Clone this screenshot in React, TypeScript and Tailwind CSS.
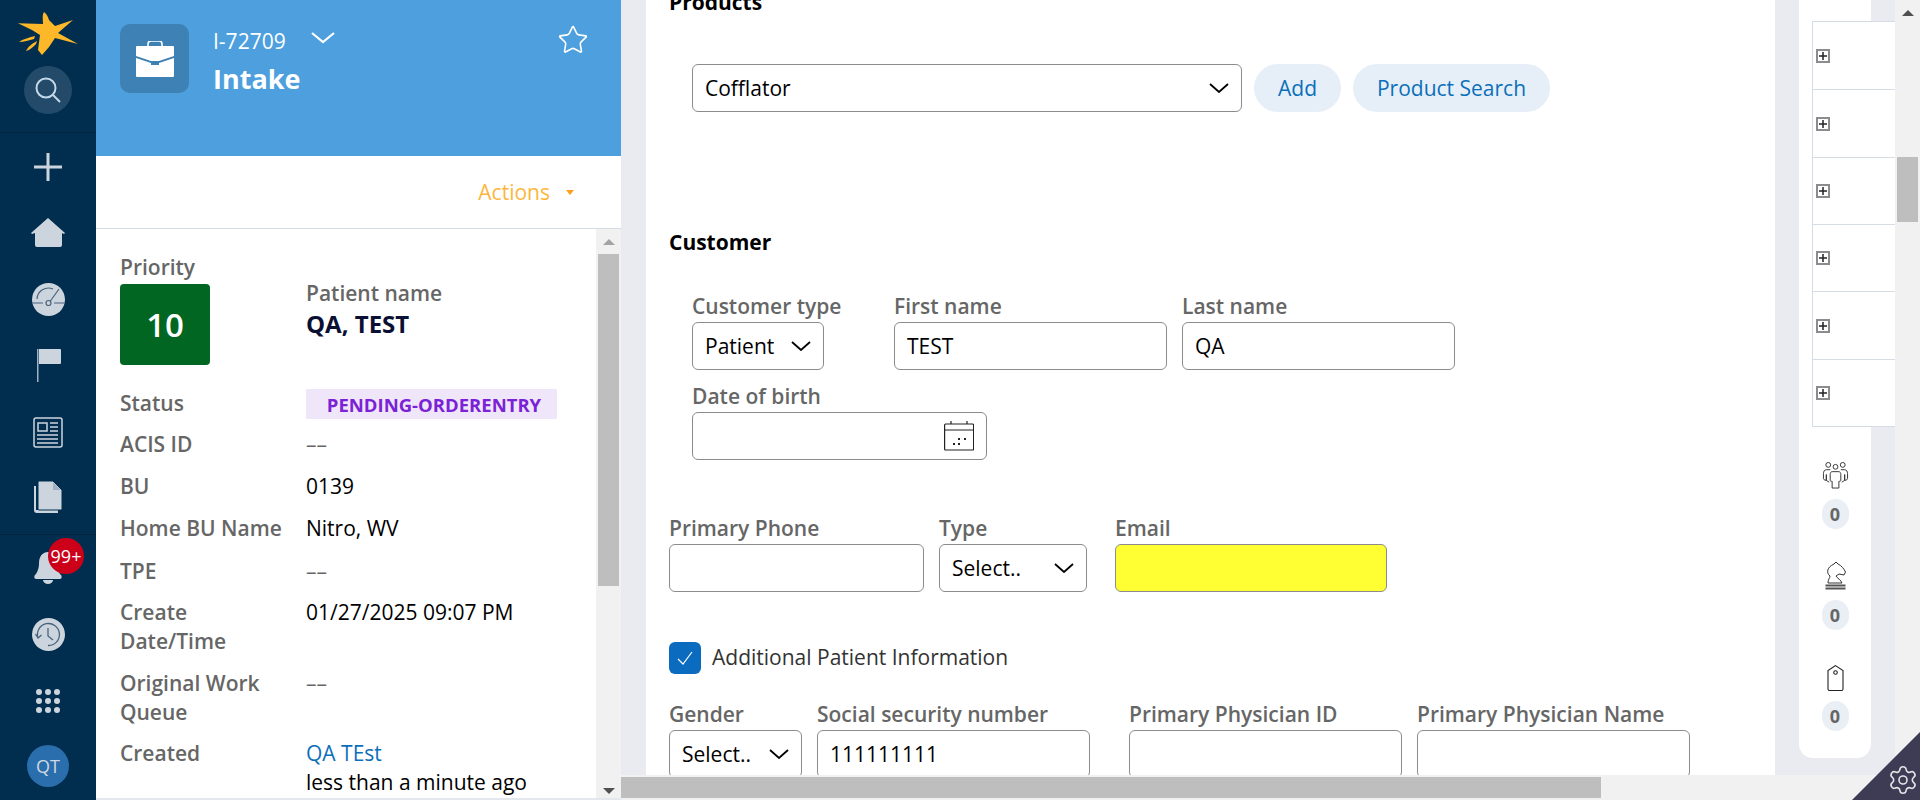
import React from "react";
import { Settings, Star } from "lucide-react";

const Chevron = ({ className = "" }: { className?: string }) => (
	<svg viewBox="0 0 20 10" fill="none" className={`h-[10px] w-[20px] ${className}`}>
		<path d="M1 1l9 8 9-8" stroke="currentColor" strokeWidth="1.8" />
	</svg>
);

const SelectBox = ({ text, width }: { text: string; width: string }) => (
	<div className={`flex h-[48px] items-center justify-between rounded-[6px] border border-[#8c8c8c] bg-white pl-[12px] pr-[12px] text-black ${width}`}>
		<span className="pt-[2px]">{text}</span>
		<Chevron />
	</div>
);

const Field = ({ label, children }: { label: string; children: React.ReactNode }) => (
	<div className="flex flex-col">
		<div className="mb-[4px] h-[24px] whitespace-nowrap font-semibold leading-[24px] text-[#666]">{label}</div>
		{children}
	</div>
);

const Input = ({ value, width, className = "bg-white" }: { value?: string; width: string; className?: string }) => (
	<div className={`flex h-[48px] items-center rounded-[6px] border border-[#8c8c8c] pl-[12px] pt-[2px] text-black ${width} ${className}`}>{value}</div>
);

const InfoRow = ({ label, value, mt }: { label: React.ReactNode; value: React.ReactNode; mt: string }) => (
	<div className={`flex leading-[29px] ${mt}`}>
		<div className="w-[186px] shrink-0 pr-[20px] font-semibold text-[#666]">{label}</div>
		<div className="text-black">{value}</div>
	</div>
);

const Dashes = () => <span className="text-[#666]">––</span>;

const Sidebar = () => (
	<aside className="flex h-[800px] w-[96px] shrink-0 flex-col items-center bg-[#012e4e]">
		<svg viewBox="0 0 60 45" className="mt-[11px] h-[45px] w-[60px] shrink-0" fill="#fdb82a">
			<path d="M0 12.300L25 13C25 8 24 4 26 1C29 3 30 6 31 9L37 15L55 9L40 22L60 33L37 27L31 36L24 44L20 39L22 24L14 19Z" />
			<path d="M1 31C5 28 10 27 17 25L16 28C11 29 6 31 1 31Z" />
			<path d="M8 40C10 36 13 33 19 30L18 33C15 36 12 39 8 40Z" />
		</svg>
		<div className="mt-[10px] flex h-[48px] w-[48px] shrink-0 items-center justify-center rounded-full bg-[#234a69]">
			<svg viewBox="0 0 26 26" fill="none" className="h-[26px] w-[26px]" stroke="#c3d9ea" strokeWidth="2">
				<circle cx="11" cy="11" r="9.500" />
				<path d="M18 18l7 7" />
			</svg>
		</div>
		<div className="mt-[18px] h-px w-full shrink-0 bg-[#012340]" />
		<svg viewBox="0 0 28 28" className="mt-[20px] h-[28px] w-[28px] shrink-0" stroke="#ccd5de" strokeWidth="3">
			<path d="M14 0v28M0 14h28" />
		</svg>
		<svg viewBox="0 0 34 29" className="mt-[37px] h-[29px] w-[34px] shrink-0" fill="#ccd5de">
			<path d="M17 0L34 15l-1 1-2-1v12a2 2 0 0 1-2 2H6a2 2 0 0 1-2-2V15l-3 1-1-1Z" />
		</svg>
		<svg viewBox="0 0 33 33" fill="none" className="mt-[36px] h-[33px] w-[33px] shrink-0">
			<circle cx="16.500" cy="16.500" r="16.500" fill="#ccd5de" />
			<path d="M5 16a11.500 11.500 0 0 1 16-10M0 20h11M22 20h11M18 18.500L27 6" stroke="#47637c" strokeWidth="1.200" />
			<circle cx="16.500" cy="20" r="2.500" stroke="#47637c" strokeWidth="1.200" />
		</svg>
		<svg viewBox="0 0 25 33" className="mt-[33px] h-[33px] w-[25px] shrink-0">
			<path d="M1 0h1.500v33H1z" fill="#9fb1c2" />
			<path d="M3 0h21a1 1 0 0 1 1 1v13a1 1 0 0 1-1 1H3Z" fill="#ccd5de" />
		</svg>
		<svg viewBox="0 0 30 31" fill="none" className="mt-[35px] h-[31px] w-[30px] shrink-0" stroke="#ccd5de" strokeWidth="1.500">
			<rect x="1" y="1" width="28" height="29" rx="2" />
			<rect x="5" y="6" width="9" height="8" />
			<path d="M17 6h8M17 10h8M17 14h8M4 18h21M4 22h21M4 26h21" />
		</svg>
		<svg viewBox="0 0 28 32" className="mt-[33px] h-[32px] w-[28px] shrink-0" fill="#ccd5de">
			<path d="M0 5h2v24h22v3H3a3 3 0 0 1-3-3Z" />
			<path d="M4 1a1 1 0 0 1 1-1h14l9 9v19a1 1 0 0 1-1 1H5a1 1 0 0 1-1-1Z" stroke="#012e4e" strokeWidth="1" />
			<path d="M19 1v8h8" fill="#9fb1c2" />
		</svg>
		<div className="mt-[21px] h-px w-full shrink-0 bg-[#012340]" />
		<div className="relative mt-[17px] h-[32px] w-[28px] shrink-0">
			<svg viewBox="0 0 28 32" className="h-[32px] w-[28px]" fill="#ccd5de">
				<path d="M14 0c6 0 9 5 9 11 0 6 2 10 4 12 1 1 1 4-1 4H2c-2 0-2-3-1-4 2-2 4-6 4-12 0-6 3-11 9-11Z" />
				<path d="M9 28h10a5 4 0 0 1-10 0Z" />
			</svg>
			<div className="absolute left-[14px] top-[-14px] flex h-[36px] w-[36px] items-center justify-center rounded-full bg-[#cc0019] text-[18px] text-white">99+</div>
		</div>
		<svg viewBox="0 0 33 33" fill="none" className="mt-[34px] h-[33px] w-[33px] shrink-0">
			<circle cx="16.500" cy="16.500" r="16.500" fill="#ccd5de" />
			<path d="M6 20A11 11 0 1 1 16 27.500M3.500 16l2.500 4 3.500-3M16 10v8l5 4" stroke="#47637c" strokeWidth="1.300" />
		</svg>
		<div className="mt-[38px] grid w-[24px] shrink-0 grid-cols-3 gap-[3px]">
			{Array.from({ length: 9 }).map((_, i) => (
				<div key={i} className="h-[6px] w-[6px] rounded-full bg-[#ccd5de]" />
			))}
		</div>
		<div className="mt-[32px] flex h-[42px] w-[42px] shrink-0 items-center justify-center rounded-full bg-[#2a6ead] text-[18px] text-[#cfd8e2]">QT</div>
	</aside>
);

const LeftPanel = () => (
	<section className="flex h-[800px] w-[525px] shrink-0 flex-col bg-white">
		<div className="flex h-[156px] shrink-0 items-start bg-[#4d9fdd] pl-[24px] pr-[32px] pt-[24px] text-white">
			<div className="flex h-[69px] w-[69px] items-center justify-center rounded-[10px] bg-[#3e81b4]">
				<svg viewBox="0 0 38 36" className="h-[36px] w-[38px]">
					<path d="M12 6V3a3 3 0 0 1 3-3h8a3 3 0 0 1 3 3v3" fill="none" stroke="#fff" strokeWidth="1.600" />
					<path d="M1 5h36a1 1 0 0 1 1 1v9l-15 5h-8L0 15V6a1 1 0 0 1 1-1Z" fill="#fff" />
					<path d="M0 17l15 5v2h8v-2l15-5v18a1 1 0 0 1-1 1H1a1 1 0 0 1-1-1Z" fill="#fff" />
				</svg>
			</div>
			<div className="ml-[24px] flex flex-col">
				<div className="flex h-[36px] items-center text-[21px]">
					I-72709
					<svg viewBox="0 0 24 12" fill="none" className="ml-[25px] mt-[-8px] h-[12px] w-[24px]">
						<path d="M1 1l11 9 11-9" stroke="#fff" strokeWidth="2.200" />
					</svg>
				</div>
				<div className="mt-[2px] text-[27px] font-bold leading-[34px]">Intake</div>
			</div>
			<Star className="ml-auto h-[32px] w-[32px]" strokeWidth={1.2} />
		</div>
		<div className="flex h-[73px] shrink-0 items-center justify-end border-b border-[#d5dce5] pr-[47px] text-[21px] text-[#fdb63c]">
			<span className="pt-[2px]">Actions</span>
			<div className="ml-[16px] h-0 w-0 border-x-[4.500px] border-t-[5px] border-x-transparent border-t-[#fd9f1c]" />
		</div>
		<div className="flex min-h-0 flex-1 border-b-2 border-[#e4e8ee]">
			<div className="min-w-0 flex-1 overflow-hidden pl-[24px] pt-[26px] text-[21px]">
				<div className="flex">
					<div className="w-[186px] shrink-0">
						<div className="font-semibold leading-[24px] text-[#666]">Priority</div>
						<div className="mt-[5px] flex h-[81px] w-[90px] items-center justify-center rounded-[4px] bg-[#006622] text-[33px] font-semibold text-white">10</div>
					</div>
					<div className="pt-[26px]">
						<div className="font-semibold leading-[24px] text-[#666]">Patient name</div>
						<div className="mt-[4px] text-[24px] font-bold leading-[30px] text-[#0a1033]">QA, TEST</div>
					</div>
				</div>
				<InfoRow
					mt="mt-[24px]"
					label={<span className="block leading-[28px]">Status</span>}
					value={
						<div className="flex h-[30px] w-[251px] items-center justify-center bg-[#f0e6fa] pl-[5px] text-[18.500px] font-bold text-[#7b22d6]">PENDING-ORDERENTRY</div>
					}
				/>
				<InfoRow mt="mt-[11px]" label="ACIS ID" value={<Dashes />} />
				<InfoRow mt="mt-[13px]" label="BU" value="0139" />
				<InfoRow mt="mt-[13px]" label="Home BU Name" value="Nitro, WV" />
				<InfoRow mt="mt-[14px]" label="TPE" value={<Dashes />} />
				<InfoRow mt="mt-[12px]" label="Create Date/Time" value="01/27/2025 09:07 PM" />
				<InfoRow mt="mt-[13px]" label="Original Work Queue" value={<Dashes />} />
				<InfoRow
					mt="mt-[12px]"
					label="Created"
					value={
						<>
							<div className="text-[#0b6fba]">QA TEst</div>
							<div>less than a minute ago</div>
						</>
					}
				/>
			</div>
			<div className="flex w-[25px] shrink-0 flex-col items-center bg-[#f1f1f1] pb-[4px] pt-[10px]">
				<div className="h-0 w-0 border-x-[6px] border-b-[6px] border-x-transparent border-b-[#a3a3a3]" />
				<div className="mt-[9px] h-[332px] w-[21px] bg-[#bebebe]" />
				<div className="mt-auto h-0 w-0 border-x-[6px] border-t-[6px] border-x-transparent border-t-[#505050]" />
			</div>
		</div>
	</section>
);

const MainForm = () => (
	<div className="w-[1129px] shrink-0 overflow-hidden bg-white pl-[23px] text-[21px]">
		<div className="mt-[-10px] font-bold leading-[24px] text-black">Products</div>
		<div className="ml-[23px] mt-[50px] flex">
			<SelectBox text="Cofflator" width="w-[550px]" />
			<div className="ml-[12px] flex h-[48px] w-[87px] items-center justify-center rounded-full bg-[#e6eff7] pt-[2px] text-[#0b6fba]">Add</div>
			<div className="ml-[12px] flex h-[48px] w-[197px] items-center justify-center rounded-full bg-[#e6eff7] pt-[2px] text-[#0b6fba]">Product Search</div>
		</div>
		<div className="mt-[118px] font-bold leading-[24px] text-black">Customer</div>
		<div className="ml-[23px] mt-[40px] flex">
			<div className="w-[132px]">
				<Field label="Customer type">
					<SelectBox text="Patient" width="w-[132px]" />
				</Field>
			</div>
			<div className="ml-[70px]">
				<Field label="First name">
					<Input value="TEST" width="w-[273px]" />
				</Field>
			</div>
			<div className="ml-[15px]">
				<Field label="Last name">
					<Input value="QA" width="w-[273px]" />
				</Field>
			</div>
		</div>
		<div className="ml-[23px] mt-[14px]">
			<Field label="Date of birth">
				<div className="flex h-[48px] w-[295px] items-center justify-end rounded-[6px] border border-[#8c8c8c] pr-[12px]">
					<svg viewBox="0 0 30 30" fill="none" className="h-[30px] w-[30px]" stroke="#222" strokeWidth="1.200">
						<rect x="0.600" y="3" width="29" height="26" rx="1" />
						<path d="M0.600 9h29M7 0v3M23 0v3" />
						<path d="M9 23h2M14 23h2M14 18h2M20 18h2" strokeWidth="2" />
					</svg>
				</div>
			</Field>
		</div>
		<div className="mt-[56px] flex">
			<Field label="Primary Phone">
				<Input width="w-[255px]" />
			</Field>
			<div className="ml-[15px]">
				<Field label="Type">
					<SelectBox text="Select.." width="w-[148px]" />
				</Field>
			</div>
			<div className="ml-[28px]">
				<Field label="Email">
					<Input width="w-[272px]" className="bg-[#ffff33]" />
				</Field>
			</div>
		</div>
		<div className="mt-[50px] flex items-center">
			<div className="flex h-[32px] w-[32px] items-center justify-center rounded-[6px] bg-[#0b6bbf]">
				<svg viewBox="0 0 16 14" fill="none" className="h-[14px] w-[16px]">
					<path d="M1 8l5 5L15 1" stroke="#fff" strokeWidth="1.200" />
				</svg>
			</div>
			<span className="ml-[11px] text-[#333]">Additional Patient Information</span>
		</div>
		<div className="mt-[28px] flex">
			<Field label="Gender">
				<SelectBox text="Select.." width="w-[133px]" />
			</Field>
			<div className="ml-[15px]">
				<Field label="Social security number">
					<Input value="111111111" width="w-[273px]" />
				</Field>
			</div>
			<div className="ml-[39px]">
				<Field label="Primary Physician ID">
					<Input width="w-[273px]" />
				</Field>
			</div>
			<div className="ml-[15px]">
				<Field label="Primary Physician Name">
					<Input width="w-[273px]" />
				</Field>
			</div>
		</div>
	</div>
);

const Counter = ({ children, mt }: { children: React.ReactNode; mt: string }) => (
	<div className={`flex flex-col items-center ${mt}`}>
		{children}
		<div className="mt-[10px] flex h-[30px] w-[27px] items-center justify-center rounded-full bg-[#e9eff4] text-[18px] font-bold text-[#666]">0</div>
	</div>
);

const SidePanel = () => (
	<div className="w-[72px] shrink-0 rounded-b-[14px] bg-white">
		<div className="ml-[13px] mt-[21px] w-[83px] border-y border-l border-[#d5dce5] bg-white">
			{Array.from({ length: 6 }).map((_, i) => (
				<div key={i} className="flex h-[67.350px] items-center border-t border-[#d5dce5] pl-[3px] first:border-t-0">
					<div className="flex h-[14px] w-[14px] items-center justify-center border-2 border-[#8c8c8c] bg-white text-black">
						<svg viewBox="0 0 8 8" className="h-[8px] w-[8px]" stroke="#222" strokeWidth="1.500">
							<path d="M4 0v8M0 4h8" />
						</svg>
					</div>
				</div>
			))}
		</div>
		<div className="flex flex-col items-center">
			<Counter mt="mt-[35px]">
				<svg viewBox="0 0 27 28" fill="none" className="h-[27px] w-[27px]" stroke="#333" strokeWidth="1">
					<circle cx="6" cy="3" r="2.500" />
					<circle cx="21" cy="3" r="2.500" />
					<circle cx="13.500" cy="5" r="2.500" />
					<path d="M8 8H4C2 8 1 10 1 12v5c0 1 1 2 3 2v-6 6l3 2M19 8h4c2 0 3 2 3 4v5c0 1-1 2-3 2v-6 6l-3 2" />
					<path d="M10 10h7c1 0 2 1 2 3v6c0 1-1 1-2 1v7h-7v-7c-1 0-2 0-2-1v-6c0-2 1-3 2-3Z" />
				</svg>
			</Counter>
			<Counter mt="mt-[33px]">
				<svg viewBox="0 0 21 28" fill="none" className="h-[28px] w-[21px]" stroke="#333" strokeWidth="1">
					<path d="M3 21C3 17 5 16 5 14C1 11 2 5 9 2L11 0L13 2C17 4 19 7 20.500 10L19 13L14 12L11 14C12 16 16 18 17 21Z" />
					<path d="M0.500 23.500h20M0.500 26.500h20" strokeWidth="2" stroke="#555" />
				</svg>
			</Counter>
			<Counter mt="mt-[35px]">
				<svg viewBox="0 0 17 26" fill="none" className="h-[26px] w-[17px]" stroke="#222" strokeWidth="1.100">
					<path d="M8.500 0.600L16 5.500V24a1.500 1.500 0 0 1-1.500 1.500h-12A1.500 1.500 0 0 1 1 24V5.500Z" />
					<circle cx="8.500" cy="7.500" r="1.800" />
				</svg>
			</Counter>
		</div>
	</div>
);

const App = () => (
	<div className="flex h-[800px] w-[1920px] overflow-hidden bg-[#e9ebf0] font-['Open_Sans',sans-serif]">
		<Sidebar />
		<LeftPanel />
		<div className="flex min-w-0 flex-1 flex-col">
			<div className="flex h-[775px] min-h-0 overflow-hidden pl-[25px]">
				<MainForm />
				<div className="ml-[24px]">
					<div className="flex h-[758px]">
						<SidePanel />
					</div>
				</div>
			</div>
			<div className="h-[25px] shrink-0 bg-[#f1f1f1] pt-[2px]">
				<div className="h-[21px] w-[980px] bg-[#bebebe]" />
			</div>
		</div>
		<div className="relative z-10 flex w-[25px] shrink-0 flex-col items-center bg-[#f1f1f1] pt-[10px]">
			<div className="h-0 w-0 border-x-[6px] border-b-[6px] border-x-transparent border-b-[#505050]" />
			<div className="mt-[141px] h-[65px] w-[21px] bg-[#bebebe]" />
			<svg viewBox="0 0 68 68" className="absolute bottom-0 right-0 h-[68px] w-[68px]">
				<path d="M68 0v68H0Z" fill="#3e3b54" />
			</svg>
			<Settings className="absolute bottom-[4px] right-[1px] h-[32px] w-[32px] text-[#e4e4ea]" strokeWidth={1.200} />
		</div>
	</div>
);

export default App;
